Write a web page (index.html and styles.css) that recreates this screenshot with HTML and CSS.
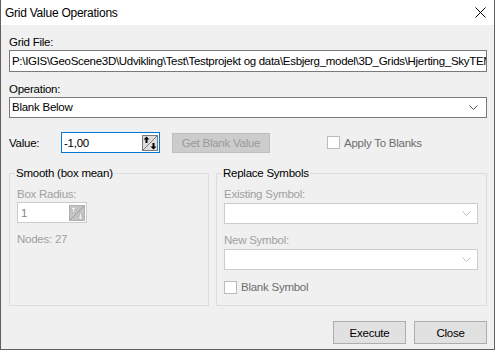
FILE: index.html
```html
<!DOCTYPE html>
<html>
<head>
<meta charset="utf-8">
<link rel="stylesheet" href="styles.css">
</head>
<body>
<div class="window">
  <div class="titlebar">
    <span class="title">Grid Value Operations</span>
    <svg class="close-x" width="11" height="11" viewBox="0 0 11 11"><path d="M0.5 0.5 L10.5 10.5 M10.5 0.5 L0.5 10.5" stroke="#000" stroke-width="1" fill="none"/></svg>
  </div>
  <div class="content">
    <div class="label first">Grid File:</div>
    <div class="textbox path">P:\IGIS\GeoScene3D\Udvikling\Test\Testprojekt og data\Esbjerg_model\3D_Grids\Hjerting_SkyTEM_Resistivity.grd</div>
    <div class="label">Operation:</div>
    <div class="combo active">
      <span>Blank Below</span>
      <svg class="chev" width="9" height="5" viewBox="0 0 9 5"><polyline points="0.5,0.5 4.5,4.5 8.5,0.5" fill="none" stroke="#555"/></svg>
    </div>
    <div class="value-row">
      <span class="value-label">Value:</span>
      <div class="spin focused">
        <span>-1,00</span>
        <svg class="spin-icon" width="16" height="16" viewBox="0 0 16 16">
          <rect x="0.5" y="0.5" width="15" height="15" fill="#dedede" stroke="#7a7a7a"/>
          <line x1="1" y1="15" x2="15" y2="1" stroke="#7a7a7a"/>
          <path d="M4.5 1.5 L1.5 4.5 H3.5 V8 H5.5 V4.5 H7.5 Z" fill="#000"/>
          <path d="M11.5 14.5 L14.5 11.5 H12.5 V8 H10.5 V11.5 H8.5 Z" fill="#000"/>
        </svg>
      </div>
      <div class="btn disabled-btn">Get Blank Value</div>
      <div class="check disabled-text apply"><span class="box"></span>Apply To Blanks</div>
    </div>
    <div class="groups">
      <fieldset class="group smooth">
        <legend>Smooth (box mean)</legend>
        <div class="glabel gray">Box Radius:</div>
        <div class="spin disabled-spin">
          <span>1</span>
          <svg class="spin-icon" width="16" height="16" viewBox="0 0 16 16">
            <rect x="0.5" y="0.5" width="15" height="15" fill="#c4c4c4" stroke="#b0b0b0"/>
            <line x1="1" y1="15" x2="15" y2="1" stroke="#9a9a9a"/>
            <path d="M4.5 1.5 L1.5 4.5 H3.5 V8 H5.5 V4.5 H7.5 Z" fill="#f2f2f2" stroke="#a8a8a8" stroke-width="0.6"/>
            <path d="M11.5 14.5 L14.5 11.5 H12.5 V8 H10.5 V11.5 H8.5 Z" fill="#f2f2f2" stroke="#a8a8a8" stroke-width="0.6"/>
          </svg>
        </div>
        <div class="glabel gray second">Nodes: 27</div>
      </fieldset>
      <fieldset class="group replace">
        <legend>Replace Symbols</legend>
        <div class="glabel gray">Existing Symbol:</div>
        <div class="combo disabled-combo">
          <span></span>
          <svg class="chev" width="9" height="5" viewBox="0 0 9 5"><polyline points="0.5,0.5 4.5,4.5 8.5,0.5" fill="none" stroke="#bdbdbd"/></svg>
        </div>
        <div class="glabel gray second">New Symbol:</div>
        <div class="combo disabled-combo">
          <span></span>
          <svg class="chev" width="9" height="5" viewBox="0 0 9 5"><polyline points="0.5,0.5 4.5,4.5 8.5,0.5" fill="none" stroke="#bdbdbd"/></svg>
        </div>
        <div class="check disabled-text blank"><span class="box"></span>Blank Symbol</div>
      </fieldset>
    </div>
    <div class="buttons">
      <div class="btn normal">Execute</div>
      <div class="btn normal">Close</div>
    </div>
  </div>
</div>
</body>
</html>
```

FILE: styles.css
```css
* { box-sizing: border-box; }
html, body { margin: 0; padding: 0; background: #ffffff; }
body {
  font-family: "Liberation Sans", Arial, sans-serif;
  font-size: 11.5px;
  letter-spacing: -0.25px;
  color: #000;
}
.window {
  width: 495px;
  height: 350px;
  border: 1px solid #606060;
  border-top: none;
  background: #f0f0f0;
  display: flex;
  flex-direction: column;
}
.titlebar {
  height: 25px;
  background: #ffffff;
  display: flex;
  align-items: center;
  justify-content: space-between;
  padding: 0 8px 0 4px;
  flex: none;
}
.title { font-size: 12px; line-height: 16px; }
.close-x { display: block; margin-top: -1px; }
.content {
  padding: 0 7px 0 8px;
  display: flex;
  flex-direction: column;
}
.label { line-height: 16px; margin-top: 9px; }
.label.first { margin-top: 9px; }
.textbox {
  height: 22px;
  border: 1px solid #7a7a7a;
  background: #fff;
  padding: 0 2px;
  line-height: 20px;
  white-space: nowrap;
  overflow: hidden;
}
.path { letter-spacing: -0.3px; }
.combo {
  height: 21px;
  border: 1px solid #7a7a7a;
  background: #fff;
  display: flex;
  align-items: center;
  justify-content: space-between;
  padding: 0 8px 0 2px;
  line-height: 19px;
}
.combo .chev { display: block; }
.disabled-combo { border-color: #cccccc; padding-right: 6px; }
.value-row {
  margin-top: 14px;
  height: 21px;
  display: flex;
  align-items: center;
}
.value-label { width: 52px; }
.spin {
  display: flex;
  align-items: center;
  justify-content: space-between;
  background: #fff;
  height: 21px;
}
.spin .spin-icon { display: block; }
.focused {
  width: 99px;
  border: 1px solid #0078d7;
  padding: 0 1px 0 2px;
}
.disabled-spin {
  width: 70px;
  border: 1px solid #cccccc;
  padding: 0 1px 0 3px;
  color: #838383;
}
.btn {
  display: flex;
  align-items: center;
  justify-content: center;
}
.disabled-btn {
  margin-left: 12px;
  width: 98px;
  height: 20px;
  background: #cccccc;
  border: 1px solid #bfbfbf;
  color: #9a9a9a;
}
.check {
  display: flex;
  align-items: center;
  line-height: 16px;
}
.check .box {
  width: 13px;
  height: 13px;
  border: 1px solid #bcbcbc;
  background: #fff;
  margin-right: 4px;
}
.disabled-text { color: #6d6d6d; }
.apply { margin-left: 57px; }
.groups {
  margin-top: 12px;
  display: flex;
  gap: 7px;
  height: 141px;
}
.group {
  margin: 0;
  border: 1px solid #dcdcdc;
  padding: 5px 7px 0 7px;
  min-width: 0;
  display: flex;
  flex-direction: column;
}
.group legend {
  padding: 0 1px;
  margin-left: -2px;
  line-height: 16px;
  color: #000;
}
.smooth { width: 200px; }
.replace { width: 271px; padding-right: 8px; }
.glabel { line-height: 16px; }
.replace .glabel + .combo { margin-top: 1px; }
.gray { color: #a0a0a0; }
.second { margin-top: 8px; }
.blank { margin-top: 9px; }
.buttons {
  margin-top: 15px;
  display: flex;
  justify-content: flex-end;
  gap: 8px;
}
.normal {
  width: 73px;
  height: 23px;
  background: #e1e1e1;
  border: 1px solid #adadad;
}
```
